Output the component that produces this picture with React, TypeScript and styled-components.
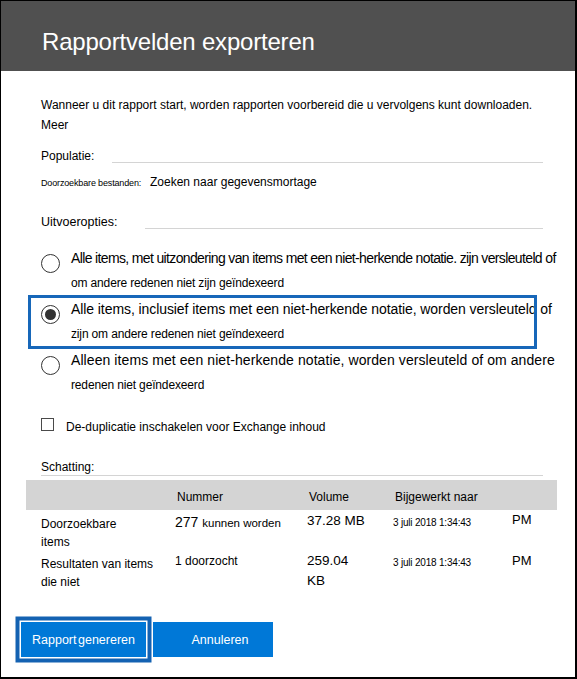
import React from 'react';
import styled, { createGlobalStyle } from 'styled-components';

const GlobalStyle = createGlobalStyle`
  html, body { margin: 0; padding: 0; background: #fff; }
  body { font-family: "Liberation Sans", Arial, sans-serif; color: #000; }
  *, *::before, *::after { box-sizing: border-box; }
`;

const Dialog = styled.div`
  width: 577px;
  height: 679px;
  border-style: solid;
  border-color: #000;
  border-width: 1px 2px 2px 1px;
  background: #fff;
  display: flex;
  flex-direction: column;
`;

const Header = styled.header`
  flex: none;
  height: 70px;
  background: #505050;
  padding: 27px 0 0 41px;
`;

const Title = styled.h1`
  margin: 0;
  font-size: 24px;
  line-height: 28px;
  font-weight: 400;
  color: #fff;
  letter-spacing: -0.2px;
  white-space: nowrap;
`;

const Content = styled.main`
  display: flex;
  flex-direction: column;
  padding: 0 32px 0 40px;
`;

const Intro = styled.p`
  margin: 24px 0 0;
  font-size: 12px;
  line-height: 20px;
  white-space: nowrap;
`;

const SectionRow = styled.div<{ $mt: number }>`
  display: flex;
  align-items: flex-end;
  margin-top: ${(p) => p.$mt}px;
`;

const SectionLabel = styled.span<{ $size: number }>`
  font-size: ${(p) => p.$size}px;
  line-height: 16px;
  white-space: nowrap;
`;

const Rule = styled.div<{ $gap: number }>`
  flex: 1;
  height: 1px;
  background: #d4d4d4;
  margin: 0 0 1px ${(p) => p.$gap}px;
`;

const SourceRow = styled.div`
  display: flex;
  align-items: baseline;
  margin-top: 10px;
`;

const SourceLabel = styled.span`
  width: 109px;
  flex: none;
  font-size: 9px;
  line-height: 16px;
  letter-spacing: -0.15px;
  white-space: nowrap;
`;

const SourceValue = styled.span`
  font-size: 12px;
  line-height: 16px;
  white-space: nowrap;
`;

const Options = styled.div`
  display: flex;
  flex-direction: column;
  margin-top: 16px;
`;

const OptionRow = styled.div<{ $focused?: boolean }>`
  position: relative;
  display: flex;
  align-items: flex-start;
  gap: 11px;
  height: 50px;
  margin-bottom: 1px;
  ${(p) =>
    p.$focused &&
    `
    &::after {
      content: '';
      position: absolute;
      left: -13px;
      right: 6px;
      top: -2px;
      bottom: -2px;
      border: 3px solid #1767b9;
      pointer-events: none;
    }
  `}
`;

const Radio = styled.span<{ $checked?: boolean }>`
  flex: none;
  width: 19px;
  height: 19px;
  margin-top: 8px;
  border: 1.5px solid #333;
  border-radius: 50%;
  display: grid;
  place-items: center;
  &::after {
    content: '';
    width: 11px;
    height: 11px;
    border-radius: 50%;
    background: ${(p) => (p.$checked ? '#333' : 'transparent')};
  }
`;

const OptionText = styled.div`
  display: flex;
  flex-direction: column;
`;

const Primary = styled.span<{ $spacing: number }>`
  font-size: 14px;
  line-height: 25px;
  letter-spacing: ${(p) => p.$spacing}px;
  white-space: nowrap;
`;

const Secondary = styled.span`
  font-size: 12px;
  line-height: 25px;
  letter-spacing: -0.15px;
  white-space: nowrap;
`;

const CheckRow = styled.div`
  display: flex;
  align-items: flex-start;
  gap: 12px;
  margin-top: 19px;
`;

const Checkbox = styled.span`
  flex: none;
  width: 13px;
  height: 13px;
  border: 1px solid #4a4a4a;
  background: #fff;
`;

const CheckLabel = styled.span`
  font-size: 12px;
  line-height: 16px;
  margin-top: 1px;
  white-space: nowrap;
`;

const EstimateTitle = styled.div`
  margin-top: 25px;
  font-size: 12px;
  line-height: 15px;
  border-bottom: 1px solid #d4d4d4;
`;

const Table = styled.div`
  margin: 4px -14px 0 -15px;
  display: flex;
  flex-direction: column;
`;

const columns = '149px 132px 86px 119px 1fr';

const TableHead = styled.div`
  display: grid;
  grid-template-columns: ${columns};
  height: 30px;
  padding-top: 9px;
  background: #d4d4d4;
  font-size: 12px;
  line-height: 16px;
`;

const HeadCell = styled.span`
  padding-left: 2px;
  white-space: nowrap;
`;

const TableRow = styled.div<{ $pt: number }>`
  display: grid;
  grid-template-columns: ${columns};
  align-items: start;
  padding-top: ${(p) => p.$pt}px;
`;

const Cell = styled.div<{ $size: number; $lh: number; $dy?: number; $pl?: number; $ls?: number }>`
  font-size: ${(p) => p.$size}px;
  line-height: ${(p) => p.$lh}px;
  margin-top: ${(p) => p.$dy ?? 0}px;
  padding-left: ${(p) => p.$pl ?? 0}px;
  letter-spacing: ${(p) => p.$ls ?? 0}px;
  white-space: nowrap;
`;

const Small = styled.span`
  font-size: 11.5px;
`;

const Footer = styled.footer`
  margin-top: auto;
  display: flex;
  gap: 7px;
  padding: 0 0 20px 20px;
`;

const Button = styled.button<{ $width: number; $focused?: boolean; $shift?: number }>`
  width: ${(p) => p.$width}px;
  height: 35px;
  border: none;
  background: #0078d7;
  color: #fff;
  font-family: inherit;
  font-size: 12.5px;
  word-spacing: -2px;
  padding: 0 0 0 ${(p) => p.$shift ?? 0}px;
  box-shadow: ${(p) => (p.$focused ? '0 0 0 1.5px #fff, 0 0 0 5.5px #1462b2' : 'none')};
  cursor: pointer;
`;

const options = [
  {
    line1: 'Alle items, met uitzondering van items met een niet-herkende notatie. zijn versleuteld of',
    line2: 'om andere redenen niet zijn geïndexeerd',
    spacing: -0.64,
    checked: false,
  },
  {
    line1: 'Alle items, inclusief items met een niet-herkende notatie, worden versleuteld of',
    line2: 'zijn om andere redenen niet geïndexeerd',
    spacing: -0.08,
    checked: true,
  },
  {
    line1: 'Alleen items met een niet-herkende notatie, worden versleuteld of om andere',
    line2: 'redenen niet geïndexeerd',
    spacing: 0.08,
    checked: false,
  },
];

export default function App() {
  return (
    <>
      <GlobalStyle />
      <Dialog>
        <Header>
          <Title>Rapportvelden exporteren</Title>
        </Header>
        <Content>
          <Intro>
            Wanneer u dit rapport start, worden rapporten voorbereid die u vervolgens kunt downloaden.
            <br />
            Meer
          </Intro>

          <SectionRow $mt={13}>
            <SectionLabel $size={12}>Populatie:</SectionLabel>
            <Rule $gap={18} />
          </SectionRow>

          <SourceRow>
            <SourceLabel>Doorzoekbare bestanden:</SourceLabel>
            <SourceValue>Zoeken naar gegevensmortage</SourceValue>
          </SourceRow>

          <SectionRow $mt={23}>
            <SectionLabel $size={12.5}>Uitvoeropties:</SectionLabel>
            <Rule $gap={28} />
          </SectionRow>

          <Options>
            {options.map((o, i) => (
              <OptionRow key={i} $focused={o.checked}>
                <Radio $checked={o.checked} />
                <OptionText>
                  <Primary $spacing={o.spacing}>{o.line1}</Primary>
                  <Secondary>{o.line2}</Secondary>
                </OptionText>
              </OptionRow>
            ))}
          </Options>

          <CheckRow>
            <Checkbox />
            <CheckLabel>De-duplicatie inschakelen voor Exchange inhoud</CheckLabel>
          </CheckRow>

          <EstimateTitle>Schatting:</EstimateTitle>

          <Table>
            <TableHead>
              <HeadCell />
              <HeadCell>Nummer</HeadCell>
              <HeadCell>Volume</HeadCell>
              <HeadCell>Bijgewerkt naar</HeadCell>
              <HeadCell />
            </TableHead>
            <TableRow $pt={5}>
              <Cell $size={12} $lh={18} $pl={15}>
                Doorzoekbare
                <br />
                items
              </Cell>
              <Cell $size={14} $lh={18} $dy={-2}>
                277 <Small>kunnen worden</Small>
              </Cell>
              <Cell $size={13.5} $lh={20} $dy={-4}>
                37.28 MB
              </Cell>
              <Cell $size={10} $lh={18} $dy={-1} $ls={-0.2}>
                3 juli 2018 1:34:43
              </Cell>
              <Cell $size={13} $lh={18} $dy={-4}>
                PM
              </Cell>
            </TableRow>
            <TableRow $pt={4}>
              <Cell $size={12} $lh={18} $pl={15}>
                Resultaten van items
                <br />
                die niet
              </Cell>
              <Cell $size={12} $lh={18} $dy={-3}>
                1 doorzocht
              </Cell>
              <Cell $size={13.5} $lh={20} $dy={-4.5}>
                259.04
                <br />
                KB
              </Cell>
              <Cell $size={10} $lh={18} $dy={-1} $ls={-0.2}>
                3 juli 2018 1:34:43
              </Cell>
              <Cell $size={13} $lh={18} $dy={-3}>
                PM
              </Cell>
            </TableRow>
          </Table>
        </Content>

        <Footer>
          <Button $width={125} $focused>
            Rapport genereren
          </Button>
          <Button $width={120} $shift={14}>
            Annuleren
          </Button>
        </Footer>
      </Dialog>
    </>
  );
}
